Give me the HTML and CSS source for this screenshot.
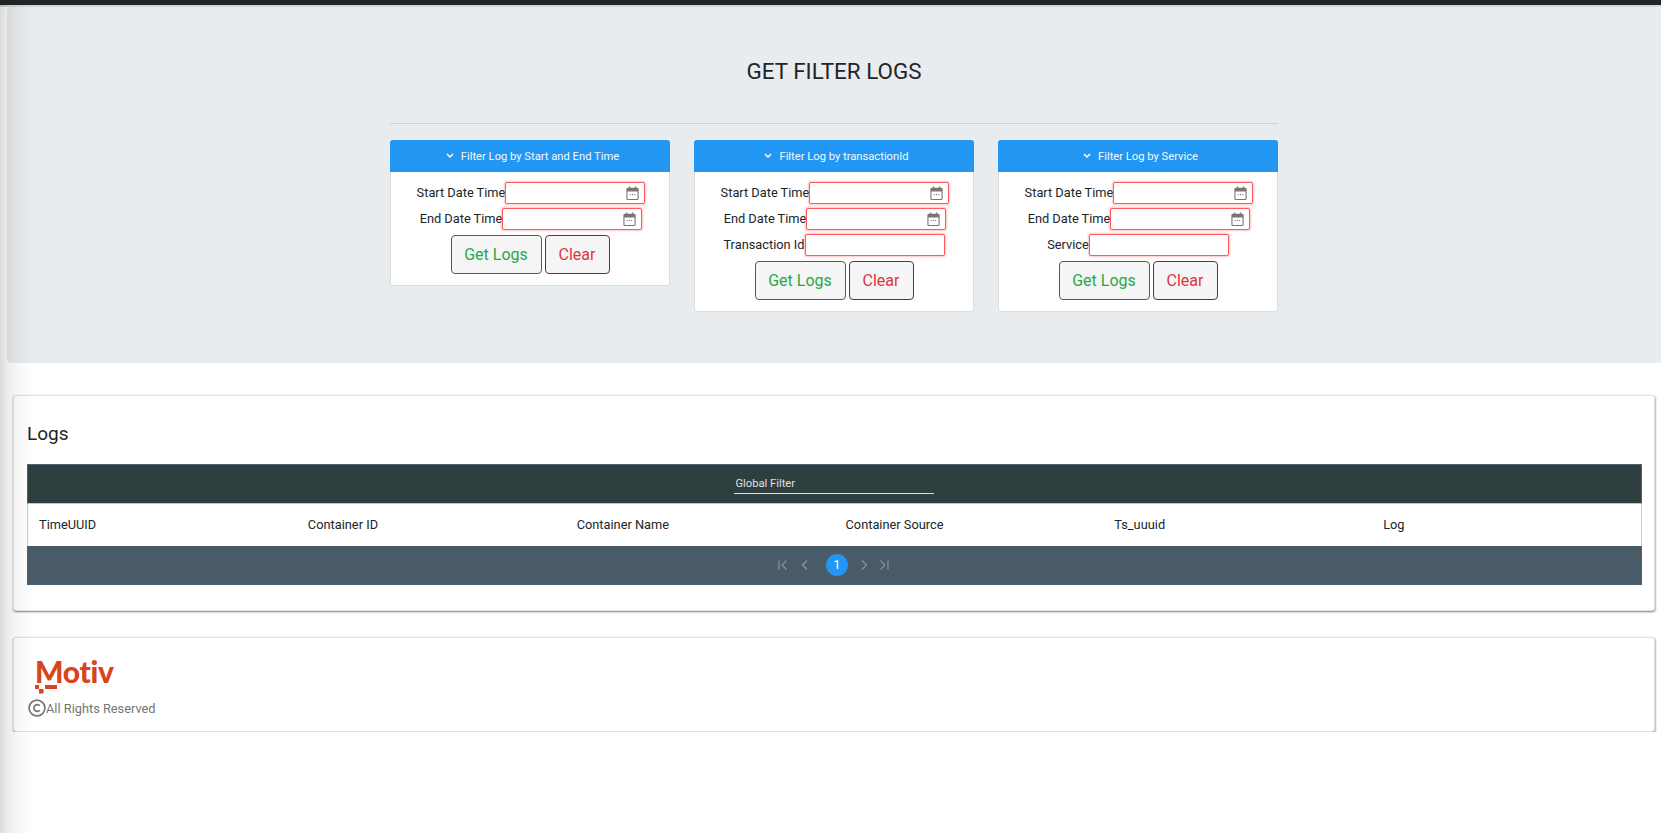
FILE: index.html
```html
<!DOCTYPE html>
<html>
  <head>
    <title>Get Filter Logs</title>
    <link rel="stylesheet" href="styles.css">
  </head>
  <body>
    <div class="topbar"></div>
    <div class="side-shadow"></div>
    <div class="page">
      <section class="filters">
        <h1>GET FILTER LOGS</h1>
        <hr />
        <div class="filter-cards">
          <div class="filter-card">
            <div class="filter-head">
              <svg class="chevron" viewBox="0 0 8 6"><path d="M1 1l3 3 3-3" /></svg>
              <span>Filter Log by Start and End Time</span>
            </div>
            <div class="filter-body">
              <div class="row row-date">
                <label>Start Date Time</label>
                <span class="field">
                  <input type="text" />
                  <svg class="cal" viewBox="0 0 14 15"><path d="M1 3.5a1 1 0 0 1 1-1h10a1 1 0 0 1 1 1v10a1 1 0 0 1-1 1H2a1 1 0 0 1-1-1z" /><path class="cal-fill" d="M1 2.5h12V6H1zM3 .5h1.5v3H3zM9.5 .5H11v3H9.5zM4 8.5h1.2v1.2H4zM6.4 8.5h1.2v1.2H6.4zM8.8 8.5H10v1.2H8.8z" /></svg>
                </span>
              </div>
              <div class="row row-date">
                <label>End Date Time</label>
                <span class="field">
                  <input type="text" />
                  <svg class="cal" viewBox="0 0 14 15"><path d="M1 3.5a1 1 0 0 1 1-1h10a1 1 0 0 1 1 1v10a1 1 0 0 1-1 1H2a1 1 0 0 1-1-1z" /><path class="cal-fill" d="M1 2.5h12V6H1zM3 .5h1.5v3H3zM9.5 .5H11v3H9.5zM4 8.5h1.2v1.2H4zM6.4 8.5h1.2v1.2H6.4zM8.8 8.5H10v1.2H8.8z" /></svg>
                </span>
              </div>
              <div class="actions">
                <button class="btn btn-get">Get Logs</button>
                <button class="btn btn-clear">Clear</button>
              </div>
            </div>
          </div>

          <div class="filter-card">
            <div class="filter-head">
              <svg class="chevron" viewBox="0 0 8 6"><path d="M1 1l3 3 3-3" /></svg>
              <span>Filter Log by transactionId</span>
            </div>
            <div class="filter-body">
              <div class="row row-date">
                <label>Start Date Time</label>
                <span class="field">
                  <input type="text" />
                  <svg class="cal" viewBox="0 0 14 15"><path d="M1 3.5a1 1 0 0 1 1-1h10a1 1 0 0 1 1 1v10a1 1 0 0 1-1 1H2a1 1 0 0 1-1-1z" /><path class="cal-fill" d="M1 2.5h12V6H1zM3 .5h1.5v3H3zM9.5 .5H11v3H9.5zM4 8.5h1.2v1.2H4zM6.4 8.5h1.2v1.2H6.4zM8.8 8.5H10v1.2H8.8z" /></svg>
                </span>
              </div>
              <div class="row row-date">
                <label>End Date Time</label>
                <span class="field">
                  <input type="text" />
                  <svg class="cal" viewBox="0 0 14 15"><path d="M1 3.5a1 1 0 0 1 1-1h10a1 1 0 0 1 1 1v10a1 1 0 0 1-1 1H2a1 1 0 0 1-1-1z" /><path class="cal-fill" d="M1 2.5h12V6H1zM3 .5h1.5v3H3zM9.5 .5H11v3H9.5zM4 8.5h1.2v1.2H4zM6.4 8.5h1.2v1.2H6.4zM8.8 8.5H10v1.2H8.8z" /></svg>
                </span>
              </div>
              <div class="row">
                <label>Transaction Id</label>
                <span class="field"><input type="text" /></span>
              </div>
              <div class="actions">
                <button class="btn btn-get">Get Logs</button>
                <button class="btn btn-clear">Clear</button>
              </div>
            </div>
          </div>

          <div class="filter-card">
            <div class="filter-head">
              <svg class="chevron" viewBox="0 0 8 6"><path d="M1 1l3 3 3-3" /></svg>
              <span>Filter Log by Service</span>
            </div>
            <div class="filter-body">
              <div class="row row-date">
                <label>Start Date Time</label>
                <span class="field">
                  <input type="text" />
                  <svg class="cal" viewBox="0 0 14 15"><path d="M1 3.5a1 1 0 0 1 1-1h10a1 1 0 0 1 1 1v10a1 1 0 0 1-1 1H2a1 1 0 0 1-1-1z" /><path class="cal-fill" d="M1 2.5h12V6H1zM3 .5h1.5v3H3zM9.5 .5H11v3H9.5zM4 8.5h1.2v1.2H4zM6.4 8.5h1.2v1.2H6.4zM8.8 8.5H10v1.2H8.8z" /></svg>
                </span>
              </div>
              <div class="row row-date">
                <label>End Date Time</label>
                <span class="field">
                  <input type="text" />
                  <svg class="cal" viewBox="0 0 14 15"><path d="M1 3.5a1 1 0 0 1 1-1h10a1 1 0 0 1 1 1v10a1 1 0 0 1-1 1H2a1 1 0 0 1-1-1z" /><path class="cal-fill" d="M1 2.5h12V6H1zM3 .5h1.5v3H3zM9.5 .5H11v3H9.5zM4 8.5h1.2v1.2H4zM6.4 8.5h1.2v1.2H6.4zM8.8 8.5H10v1.2H8.8z" /></svg>
                </span>
              </div>
              <div class="row">
                <label>Service</label>
                <span class="field"><input type="text" /></span>
              </div>
              <div class="actions">
                <button class="btn btn-get">Get Logs</button>
                <button class="btn btn-clear">Clear</button>
              </div>
            </div>
          </div>
        </div>
      </section>

      <section class="card logs">
        <h2>Logs</h2>
        <div class="table">
          <div class="table-top">
            <input class="global-filter" type="text" placeholder="Global Filter" />
          </div>
          <div class="table-cols">
            <div>TimeUUID</div>
            <div>Container ID</div>
            <div>Container Name</div>
            <div>Container Source</div>
            <div>Ts_uuuid</div>
            <div>Log</div>
          </div>
          <div class="paginator">
            <svg class="pg-icon pg-first" viewBox="0 0 10 12"><path d="M1 1.500v9M8.500 1.500L4 6l4.500 4.500" /></svg>
            <svg class="pg-icon pg-prev" viewBox="0 0 10 12"><path d="M7 1.500L2.500 6 7 10.500" /></svg>
            <span class="pg-num">1</span>
            <svg class="pg-icon pg-next" viewBox="0 0 10 12"><path d="M3 1.500L7.500 6 3 10.500" /></svg>
            <svg class="pg-icon pg-last" viewBox="0 0 10 12"><path d="M1.500 1.500L6 6l-4.500 4.500M9 1.500v9" /></svg>
          </div>
        </div>
      </section>

      <section class="card footer">
        <div class="logo">
          <span class="logo-word">Motiv</span>
          <svg class="logo-marks" viewBox="0 0 22 9"><path d="M0 0h4v4H0zM4 4h4.500v4.500H4zM10 0h12v4H10z" /></svg>
        </div>
        <div class="rights">
          <svg class="copy" viewBox="0 0 16 16"><circle cx="8" cy="8" r="7" /><path d="M10.500 6a3 3 0 1 0 0 4" /></svg>
          <span>All Rights Reserved</span>
        </div>
      </section>
    </div>
  </body>
</html>
```

FILE: styles.css
```css
* {
  box-sizing: border-box;
}
body {
  margin: 0;
  background-color: #fff;
  color: #212529;
  font-family: Roboto, sans-serif;
  font-size: 12.8px;
}
.topbar {
  height: 7px;
  background-color: #d6d7d7;
  border-top: 5px solid #212526;
}
.side-shadow {
  position: fixed;
  top: 5px;
  bottom: 0;
  left: 0;
  width: 34px;
  background: linear-gradient(to right, rgba(0, 0, 0, 0.14), rgba(0, 0, 0, 0.08) 7px, rgba(0, 0, 0, 0.03) 18px, rgba(0, 0, 0, 0));
  pointer-events: none;
}
.filters {
  margin-left: 7px;
  height: 356px;
  padding-top: 50px;
  background-color: #e9ecef;
  border-radius: 4px 0 0 4px;
}
h1 {
  margin: 0;
  height: 29px;
  font-size: 22.4px;
  font-weight: 400;
  line-height: 29px;
  text-align: center;
}
hr {
  width: 888px;
  margin: 37px auto 16px;
  border: 0;
  border-top: 1px solid #ced1d4;
}
.filter-cards {
  display: flex;
  justify-content: center;
  align-items: flex-start;
  gap: 24px;
}
.filter-card {
  width: 280px;
  background-color: #fff;
  border-radius: 3px;
  box-shadow: 0 0 0 1px #dcdfe1 inset;
}
.filter-head {
  display: flex;
  justify-content: center;
  align-items: center;
  gap: 7px;
  height: 32px;
  padding-left: 5px;
  background-color: #2196f3;
  border-radius: 3px 3px 0 0;
  color: #f4f9fe;
  font-size: 11.2px;
}
.chevron {
  width: 8px;
  height: 6px;
  fill: none;
  stroke: #fff;
  stroke-width: 1.500;
}
.filter-body {
  padding: 10px 0 12px;
}
.row {
  display: flex;
  justify-content: center;
  align-items: center;
  height: 22px;
  margin-bottom: 4px;
}
.row-date {
  padding-left: 2px;
}
.row label {
  padding-bottom: 2px;
  white-space: nowrap;
}
.field {
  display: flex;
  align-items: center;
  width: 140px;
  height: 22px;
  padding-right: 5px;
  background-color: #fff;
  border: 1px solid #ff5a5f;
  border-radius: 2px;
  box-shadow: 0 0 2px 1px rgba(255, 90, 95, 0.35);
}
.field input {
  flex: 1;
  min-width: 0;
  height: 100%;
  border: 0;
  outline: 0;
  background: transparent;
}
.cal {
  width: 13px;
  height: 14px;
  flex: none;
}
.cal path {
  fill: none;
  stroke: #777;
  stroke-width: 1.200;
}
.cal .cal-fill {
  fill: #777;
  stroke: none;
}
.actions {
  display: flex;
  justify-content: center;
  gap: 3px;
  margin-top: 5px;
}
.btn {
  height: 39px;
  padding: 0;
  background-color: #f5f5f5;
  border: 1px solid;
  border-radius: 4px;
  font-family: Roboto, sans-serif;
  font-size: 16px;
  white-space: nowrap;
}
.btn-get {
  width: 91px;
  border-color: #1e7e34;
  color: #28a745;
}
.btn-clear {
  width: 65px;
  border-color: #911f2b;
  color: #dc3545;
}
.card {
  margin: 0 6px 0 13px;
  background-color: #fff;
  border: 1px solid #e0e0e0;
  border-radius: 3px;
  box-shadow: 1px 1px 2px rgba(0, 0, 0, 0.2), 0 1px 2px rgba(0, 0, 0, 0.35);
}
.logs {
  height: 216px;
  margin-top: 32px;
  padding: 14px 12px 0 13px;
}
h2 {
  margin: 0 0 19px;
  height: 35px;
  font-size: 19px;
  font-weight: 400;
  line-height: 48px;
}
.table-top {
  display: flex;
  justify-content: center;
  height: 40px;
  padding-top: 11px;
  background-color: #2f3e3f;
  border: 1px solid #4a6470;
  border-bottom: 1px solid #c8c8c8;
}
.global-filter {
  width: 200px;
  height: 18px;
  margin-right: 2px;
  padding: 0 2px 2px;
  background: transparent;
  border: 0;
  border-bottom: 1px solid #ddd;
  outline: 0;
  color: #fff;
  font-family: Roboto, sans-serif;
  font-size: 11.2px;
}
.global-filter::placeholder {
  color: #dfe3e3;
  opacity: 1;
}
.table-cols {
  display: grid;
  grid-template-columns: repeat(6, 1fr);
  align-items: center;
  height: 42px;
  padding-bottom: 2px;
  border-left: 1px solid #ccc;
  border-right: 1px solid #ccc;
}
.table-cols div {
  padding-left: 11px;
}
.paginator {
  display: flex;
  justify-content: center;
  align-items: center;
  height: 39px;
  background-color: #485b67;
  border: 1px solid #4a6470;
  border-top: 0;
}
.pg-icon {
  width: 10px;
  height: 12px;
  fill: none;
  stroke: #87939b;
  stroke-width: 1.300;
}
.pg-first {
  margin-right: 12px;
}
.pg-prev {
  margin-right: 16px;
}
.pg-next {
  margin-left: 11px;
  margin-right: 10px;
}
.pg-last {
  margin-right: 2px;
}
.pg-num {
  width: 22px;
  height: 22px;
  background-color: #2196f3;
  border-radius: 50%;
  color: #fff;
  font-size: 13px;
  line-height: 22px;
  text-align: center;
}
.footer {
  height: 95px;
  margin-top: 26px;
  padding: 18px 14px 0;
}
.logo {
  margin-left: 7px;
  height: 43px;
}
.logo-word {
  display: block;
  height: 29px;
  color: #d9441c;
  font-family: Lato, sans-serif;
  font-size: 30px;
  font-weight: 900;
  line-height: 30px;
  letter-spacing: -0.3px;
}
.logo-marks {
  display: block;
  width: 22px;
  height: 9px;
  fill: #d9441c;
}
.rights {
  display: flex;
  align-items: center;
  color: #757575;
  font-size: 12.8px;
}
.copy {
  width: 18px;
  height: 18px;
  fill: none;
  stroke: #757575;
  stroke-width: 1.500;
}
```
